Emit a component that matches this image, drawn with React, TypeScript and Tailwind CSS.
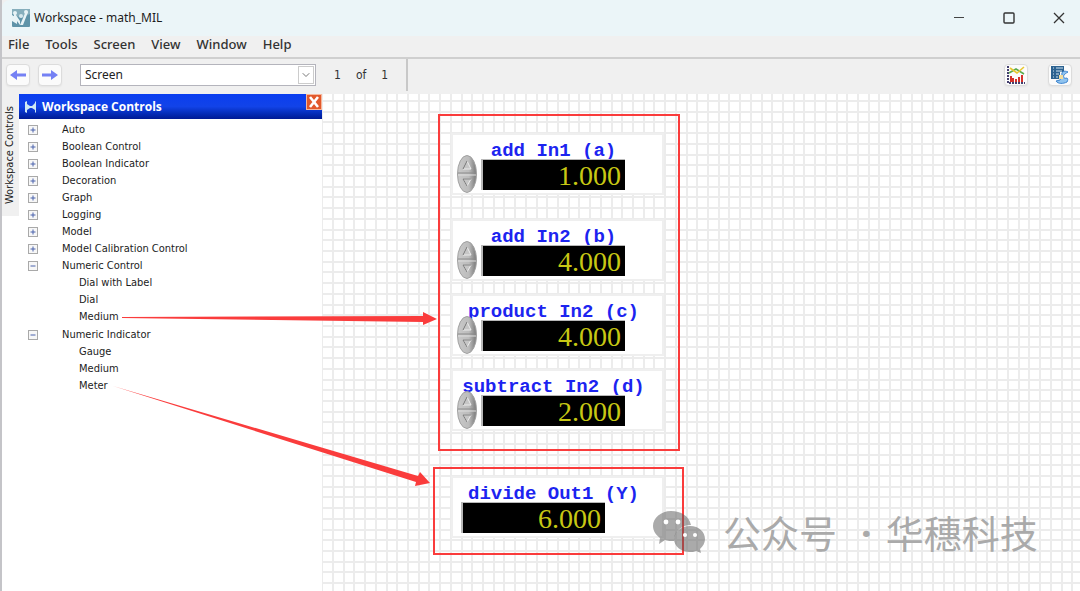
import { useState } from 'react';
import { ChevronDown } from 'lucide-react';
import clsx from 'clsx';

interface TreeNode {
  label: string;
  children?: string[];
}

interface NumericWidget {
  label: string;
  value: string;
  kind: 'control' | 'indicator';
  place: string;
}

const menus = ['File', 'Tools', 'Screen', 'View', 'Window', 'Help'];

const tree: TreeNode[] = [
  { label: 'Auto' },
  { label: 'Boolean Control' },
  { label: 'Boolean Indicator' },
  { label: 'Decoration' },
  { label: 'Graph' },
  { label: 'Logging' },
  { label: 'Model' },
  { label: 'Model Calibration Control' },
  { label: 'Numeric Control', children: ['Dial with Label', 'Dial', 'Medium'] },
  { label: 'Numeric Indicator', children: ['Gauge', 'Medium', 'Meter'] },
];

// Positions on the screen canvas
const widgets: NumericWidget[] = [
  { label: 'add In1 (a)', value: '1.000', kind: 'control', place: 'left-[129px] top-[39px]' },
  { label: 'add In2 (b)', value: '4.000', kind: 'control', place: 'left-[129px] top-[125px]' },
  { label: 'product In2 (c)', value: '4.000', kind: 'control', place: 'left-[129px] top-[200px]' },
  { label: 'subtract In2 (d)', value: '2.000', kind: 'control', place: 'left-[129px] top-[275px]' },
  { label: 'divide Out1 (Y)', value: '6.000', kind: 'indicator', place: 'left-[129px] top-[382px]' },
];

// Seven cells per 75px tile
const gridLines = [0, 11, 21, 32, 43, 54, 64];

function AppIcon() {
  return (
    <svg width="18" height="18" viewBox="0 0 18 18">
      <rect width="18" height="18" rx="1" fill="#5f93a8" />
      <path d="M0 0h18v5L9 9 0 5z" fill="#86aebc" />
      <path d="M0 6l5 3v6l-5-3zM2 3l6 9v4L2 8zM14 2l2 1-5 13H8z" fill="#e8f3f6" />
      <circle cx="3" cy="4" r="2" fill="#e8f3f6" />
      <circle cx="9" cy="7" r="2" fill="#d5e7ec" />
      <circle cx="14" cy="3" r="2" fill="#e8f3f6" />
    </svg>
  );
}

function TitleBar() {
  return (
    <header className="flex h-9 items-center rounded-tl-lg bg-[#ebf5f8] pl-2.5">
      <AppIcon />
      <h1 className="ml-1 font-['Noto_Sans',sans-serif] text-[12px] text-[#1c1c1c]">Workspace - math_MIL</h1>
      <div className="ml-auto flex gap-3.5 pr-[3px]">
        <button aria-label="Minimize" className="flex h-9 w-9 items-center justify-center">
          <svg width="12" height="12" viewBox="0 0 12 12" stroke="#444" fill="none"><path d="M1 5.500h10" /></svg>
        </button>
        <button aria-label="Maximize" className="flex h-9 w-9 items-center justify-center">
          <svg width="12" height="12" viewBox="0 0 12 12" stroke="#333" strokeWidth="1.4" fill="none"><rect x="1" y="1" width="10" height="10" rx="1" /></svg>
        </button>
        <button aria-label="Close" className="flex h-9 w-9 items-center justify-center">
          <svg width="12" height="12" viewBox="0 0 12 12" stroke="#333" strokeWidth="1.3" fill="none"><path d="M1 1l10 10M11 1L1 11" /></svg>
        </button>
      </div>
    </header>
  );
}

function MenuBar() {
  return (
    <nav className="flex h-[21px] items-center gap-4 bg-[#f0f0f0] pb-1 pl-1.5 font-['Noto_Sans',sans-serif] text-[13px] font-medium text-[#333]">
      {menus.map((menu) => (
        <button key={menu}>{menu}</button>
      ))}
    </nav>
  );
}

const toolButton = 'flex h-[22px] w-6 items-center justify-center rounded-sm border border-[#dcdcdc] bg-[#fbfbfb] shadow-xs';

function Toolbar() {
  return (
    <div className="flex h-[37px] items-center border-t-2 border-[#cfcfcf] bg-[#f0f0f0] pb-1 pl-1 pr-2">
      <button aria-label="Previous screen" className={toolButton}>
        <svg width="16" height="12" viewBox="0 0 16 12" fill="#7480f4"><path d="M0 6l7-5v3.500h9v3h-9v3.500z" /></svg>
      </button>
      <button aria-label="Next screen" className={clsx(toolButton, 'ml-2')}>
        <svg width="16" height="12" viewBox="0 0 16 12" fill="#7480f4"><path d="M16 6l-7-5v3.500h-9v3h9v3.500z" /></svg>
      </button>
      <div className="relative ml-[18px] flex">
        <select aria-label="Screen" className="h-[22px] w-[236px] appearance-none border border-[#b4b4bc] bg-white pl-1 font-['Noto_Sans',sans-serif] text-[12px] text-[#222]">
          <option>Screen</option>
        </select>
        <span className="pointer-events-none absolute right-0.5 top-0.5 flex h-[18px] w-4 items-center justify-center border border-[#ccc] bg-white">
          <ChevronDown className="h-3 w-3 text-[#777]" />
        </span>
      </div>
      <p className="ml-[18px] flex gap-[15px] font-['DejaVu_Sans_Condensed','DejaVu_Sans',sans-serif] text-[12px] text-[#333]">
        <span>1</span>
        <span>of</span>
        <span>1</span>
      </p>
      <span className="ml-[18px] h-8 w-0.5 bg-[#c8c8c8]" />
      <div className="ml-auto flex gap-5">
        <button aria-label="Charts" className={toolButton}>
          <svg width="18" height="18" viewBox="0 0 18 18" fill="none">
            <path d="M1 0v17h17" stroke="#44406e" strokeWidth="2" strokeDasharray="2 1" />
            <path d="M2 7L9 3l8 5" stroke="#5cab4e" strokeWidth="1.6" />
            <path d="M3 2l7 5 7-6" stroke="#e8c832" strokeWidth="1.6" />
            <path d="M3 16v-6h2v2h2v4h1v-3h2v3h1v-5h2v5h1v-7h2v7z" fill="#d5302a" />
          </svg>
        </button>
        <button aria-label="Edit mappings" className={toolButton}>
          <svg width="18" height="18" viewBox="0 0 18 18" fill="none">
            <path d="M0 0h13v6H9v7H0z" fill="#2c6290" />
            <path d="M2 2h1M2 5h1M2 8h1M2 11h1M5 2h7M5 5h6M5 8h3M5 11h2" stroke="#cfe3f1" />
            <path d="M17 6c-4-2-7 0-6 3l-2 5-4 1c2 3 7 3 11 1 1-2 1-3 0-4-3 1-4-1-3-3 1-1 2-2 4-3z" fill="#8fc3ee" stroke="#3b83cf" />
            <path d="M8 9h4v4H8z" fill="#f2dc9c" />
          </svg>
        </button>
      </div>
    </div>
  );
}

function Expander({ open, label, onClick }: { open: boolean; label: string; onClick: () => void }) {
  return (
    <button aria-label={label} onClick={onClick} className="mr-6 h-2.5 w-2.5">
      <svg width="10" height="10" viewBox="0 0 10 10" fill="none">
        <rect x="0.500" y="0.500" width="9" height="9" fill="#f7f7f7" stroke="#a9a9a9" />
        <path d={open ? 'M2.500 5h5' : 'M2.500 5h5M5 2.500v5'} stroke="#4a62ac" />
      </svg>
    </button>
  );
}

function ControlsPanel() {
  const [open, setOpen] = useState<string[]>(['Numeric Control', 'Numeric Indicator']);

  const toggle = (label: string) => {
    setOpen((prev) => (prev.includes(label) ? prev.filter((l) => l !== label) : [...prev, label]));
  };

  return (
    <aside className="flex w-[320px] shrink-0 bg-white">
      <button className="flex h-[122px] w-[17px] items-center justify-center bg-[#f0f0f0] font-['DejaVu_Sans_Condensed','DejaVu_Sans',sans-serif] text-[11px] text-[#222] [writing-mode:vertical-rl]">
        <span className="rotate-180">Workspace Controls</span>
      </button>
      <div className="min-w-0 flex-1">
        <div className="flex h-[25px] items-center bg-linear-to-b from-[#0a3df0] via-[#1243e8] to-[#001a94] pl-1.5">
          <svg width="11" height="12" viewBox="0 0 11 12"><path d="M0 1l2-1v3l3 2h2l3-3V0l1 1v10l-1 1V9L7 7H5L2 9v3l-2-1z" fill="#cfe9f4" /></svg>
          <h2 className="ml-1.5 font-['Open_Sans',sans-serif] text-[12px] font-bold text-white">Workspace Controls</h2>
          <button aria-label="Close panel" className="mb-auto ml-auto flex h-4 w-4 items-center justify-center border border-[#f7b79c] bg-[#e2592c]">
            <svg width="10" height="12" viewBox="0 0 10 12" stroke="#fff" strokeWidth="2.600"><path d="M1 1l8 10M9 1L1 11" /></svg>
          </button>
        </div>
        <ul className="pt-0.5 font-['DejaVu_Sans_Condensed','DejaVu_Sans',sans-serif] text-[11px] leading-[17px] text-[#1c1c1c]">
          {tree.map((node) => (
            <li key={node.label}>
              <div className="flex items-center pl-[9px]">
                <Expander open={open.includes(node.label)} label={`Toggle ${node.label}`} onClick={() => toggle(node.label)} />
                {node.label}
              </div>
              {node.children && open.includes(node.label) && (
                <ul className="pb-px pl-[60px]">
                  {node.children.map((child) => (
                    <li key={child}>{child}</li>
                  ))}
                </ul>
              )}
            </li>
          ))}
        </ul>
      </div>
    </aside>
  );
}

function Spinner() {
  return (
    <svg width="20" height="38" viewBox="0 0 20 38">
      <defs>
        <linearGradient id="knob" x1="0" y1="0" x2="1" y2="0">
          <stop offset="0" stopColor="#c9c9c9" />
          <stop offset="0.600" stopColor="#bcbcbc" />
          <stop offset="1" stopColor="#777" />
        </linearGradient>
      </defs>
      <ellipse cx="10" cy="19" rx="9.500" ry="18.500" fill="url(#knob)" stroke="#a0a0a0" />
      <path d="M1 18h18" stroke="#8a8a8a" />
      <path d="M1 20h18" stroke="#dedede" />
      <path d="M10 6l-4 8h8z" fill="#c6c6c6" stroke="#ececec" />
      <path d="M10 6l-4 8" stroke="#6e6e6e" />
      <path d="M10 31l-4-7h8z" fill="#c6c6c6" stroke="#ececec" />
      <path d="M10 31l-4-7h8" stroke="#777" fill="none" />
    </svg>
  );
}

const readout =
  "block h-[31px] w-36 border-l-2 border-t border-[#b8b8b8] bg-black pr-1 pt-0.5 text-right font-['Liberation_Serif',serif] text-[28px] leading-[28px] text-[#c8c814]";

function Widget({ label, value, kind, place }: NumericWidget) {
  const isControl = kind === 'control';
  return (
    <div className={clsx('absolute h-[62px] w-[213px] border-2 border-[#efefef] bg-white', place)}>
      <label
        htmlFor={label}
        className="mt-1.5 block h-[18px] whitespace-pre pr-2 text-center font-['Liberation_Mono',monospace] text-[19px] leading-5 font-bold text-[#1c24f0]"
      >
        {label}
      </label>
      <div className={clsx('relative flex items-start', isControl ? 'pl-1' : 'pl-2')}>
        {isControl && (
          <span className="-mt-1 mr-1">
            <Spinner />
          </span>
        )}
        {isControl ? (
          <input id={label} defaultValue={value} className={readout} />
        ) : (
          <output id={label} className={readout}>{value}</output>
        )}
      </div>
    </div>
  );
}

function Canvas() {
  return (
    <main className="relative min-w-0 flex-1 bg-white">
      <svg className="absolute inset-0 h-full w-full">
        <defs>
          <pattern id="grid" width="75" height="75" x="10" y="6" patternUnits="userSpaceOnUse">
            {gridLines.map((n) => (
              <path key={n} d={`M${n} 0h2v75h-2zM0 ${n}h75v2h-75z`} fill="#ececec" />
            ))}
          </pattern>
        </defs>
        <rect width="100%" height="100%" fill="url(#grid)" />
      </svg>
      {widgets.map((widget) => (
        <Widget key={widget.label} {...widget} />
      ))}
      <div className="pointer-events-none absolute left-[116px] top-5 h-[337px] w-[242px] border-2 border-[#fa3c3c]" />
      <div className="pointer-events-none absolute left-[111px] top-[373px] h-[88px] w-[251px] border-2 border-[#fa3c3c]" />
      <p className="absolute left-[331px] top-[414px] flex items-center whitespace-pre font-['Noto_Sans_CJK_SC',sans-serif] text-[38px] leading-[48px] text-[#aaaaaa]">
        <svg width="52" height="42" viewBox="0 0 52 42" className="mr-[18px]">
          <path d="M18 0C8 0 0 7 0 15c0 5 3 9 7 12l-1 6 6-4c3 1 6 1 9 1 0-10 8-16 17-16C36 5 28 0 18 0z" fill="#555" fillOpacity="0.500" />
          <path d="M37 15c-9 0-16 6-16 13s7 13 16 13c2 0 4 0 6-1l5 2-1-4c3-3 5-6 5-10 0-7-6-13-15-13z" fill="#555" fillOpacity="0.500" />
          <g fill="#fff">
            <circle cx="13" cy="11" r="2.400" /><circle cx="25" cy="11" r="2.400" />
            <circle cx="32" cy="24" r="2" /><circle cx="42" cy="24" r="2" />
          </g>
        </svg>
        <span>公众号</span>
        <span className="ml-6 mr-3.5 font-['Noto_Sans',sans-serif] font-bold">·</span>
        <span>华穗科技</span>
      </p>
    </main>
  );
}

export default function App() {
  return (
    <div className="flex min-h-screen flex-col border-l-2 border-[#c4c4c8] bg-[#f0f0f0]">
      <TitleBar />
      <MenuBar />
      <Toolbar />
      <div className="relative flex flex-1">
        <ControlsPanel />
        <Canvas />
        <svg className="pointer-events-none absolute left-0 top-0" width="440" height="400" viewBox="2 94 440 400" fill="#fa3c3c">
          <path d="M122 317l301-1v-4l14 7-14 6v-3l-301-4z" />
          <path d="M113 386l305 90 2-4 10 11-15 3 1-4z" />
        </svg>
      </div>
    </div>
  );
}
